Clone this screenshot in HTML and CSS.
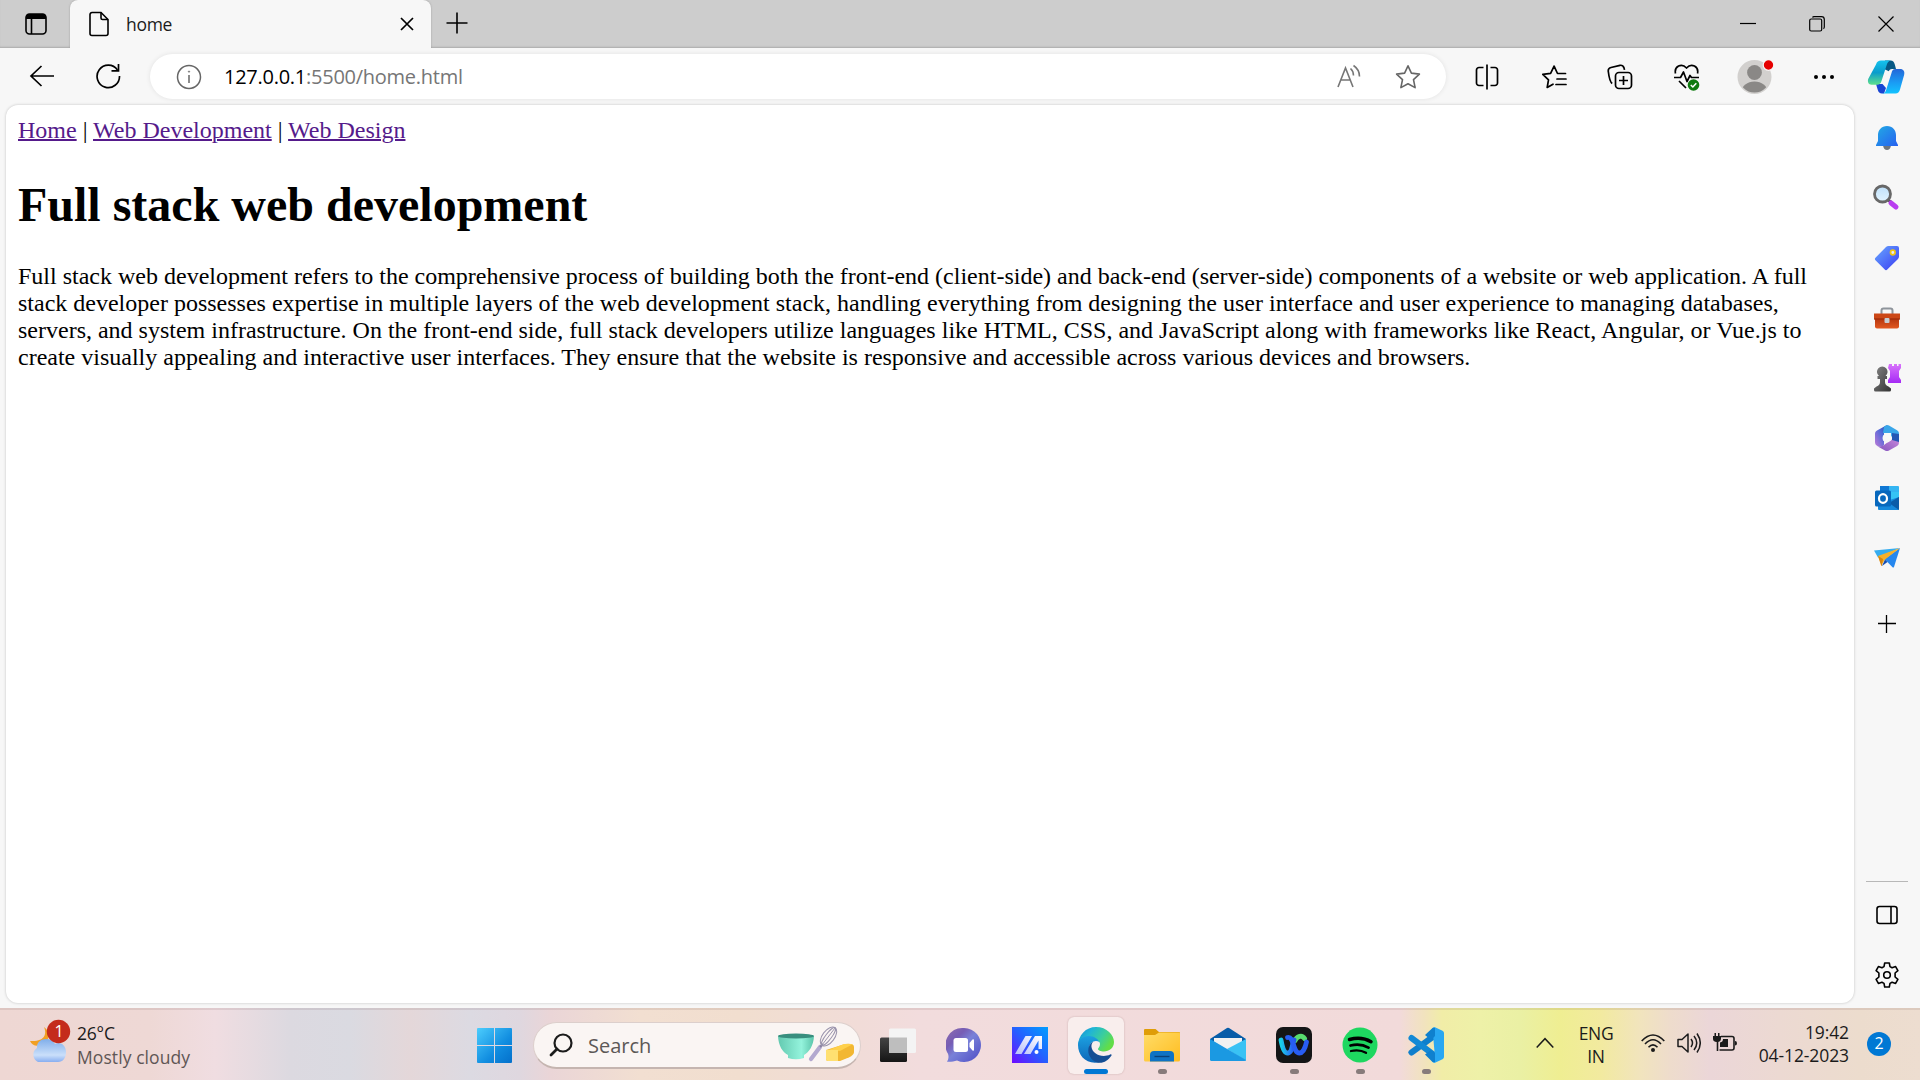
FILE: index.html
```html
<!DOCTYPE html>
<html lang="en">
<head>
<meta charset="utf-8">
<title>home</title>
<link rel="stylesheet" href="styles.css">
</head>
<body>
<div class="desktop">
  <header class="titlebar">
    <div class="tab-actions"><svg width="22" height="22" viewBox="0 0 22 22"><rect x="1" y="1" width="20" height="20" rx="3.5" fill="none" stroke="#000" stroke-width="1.6"/><path d="M1 6V4a3 3 0 0 1 3-3h14a3 3 0 0 1 3 3v2z"/><path d="M6.5 6v15" stroke="#000" stroke-width="1.6"/></svg></div>
    <div class="tab">
      <svg width="20" height="26" viewBox="0 0 20 26" fill="none" stroke="#000" stroke-width="1.6"><path d="M3 1.5h9L19 8.500V22.500a2 2 0 0 1-2 2H3a2 2 0 0 1-2-2V3.500a2 2 0 0 1 2-2z"/><path d="M12 1.500V7a1.500 1.500 0 0 0 1.500 1.500H19"/></svg>
      <span class="tab-title">home</span>
      <svg width="14" height="14" viewBox="0 0 14 14" stroke="#000" stroke-width="1.7"><path d="M1 1l12 12M13 1L1 13"/></svg>
    </div>
    <div class="new-tab"><svg width="22" height="22" viewBox="0 0 22 22" stroke="#000" stroke-width="1.6"><path d="M11 .5v21M.5 11h21"/></svg></div>
    <div class="window-controls">
      <span><svg width="16" height="16" viewBox="0 0 16 16" stroke="#000" stroke-width="1.200"><path d="M0 7.500h16"/></svg></span>
      <span><svg width="16" height="16" viewBox="0 0 16 16" fill="none" stroke="#000" stroke-width="1.200"><rect x=".7" y="3" width="12" height="12" rx="1.500"/><path d="M3.500 1.500c.3-.6.8-.8 1.500-.8h7.500a2.800 2.800 0 0 1 2.800 2.800V11c0 .8-.3 1.300-.9 1.600"/></svg></span>
      <span><svg width="16" height="16" viewBox="0 0 16 16" stroke="#000" stroke-width="1.200"><path d="M.5.5l15 15M15.500.5l-15 15"/></svg></span>
    </div>
  </header>

  <div class="toolbar">
    <div class="nav-buttons">
      <span><svg width="26" height="24" viewBox="0 0 26 24" fill="none" stroke="#000" stroke-width="1.700"><path d="M12.500 2L2 12l10.500 10M2 12h23"/></svg></span>
      <span><svg width="26" height="26" viewBox="0 0 26 26" fill="none" stroke="#000" stroke-width="1.700"><path d="M22.500 7A11.200 11.200 0 1 0 24.500 13"/><path d="M23.500 1v6.800h-7"/></svg></span>
    </div>
    <div class="address">
      <svg width="26" height="26" viewBox="0 0 26 26" fill="none" stroke="#666" stroke-width="1.500"><circle cx="13" cy="13" r="11.500"/><path d="M13 11v8"/><circle cx="13" cy="7.600" r=".7" fill="#666" stroke-width=".6"/></svg>
      <span class="url"><b>127.0.0.1</b>:5500/home.html</span>
      <svg class="read" width="26" height="26" viewBox="0 0 26 26" fill="none" stroke="#767676" stroke-width="1.600"><path d="M2 23L9.500 4 17 23M4.500 16h10"/><path d="M14.500 4.500c2 1.800 3 4.300 3 7M17.500 1.500c3.700 2.500 6 6.200 6 11"/></svg>
      <svg width="26" height="26" viewBox="0 0 26 26" fill="none" stroke="#666" stroke-width="1.600" stroke-linejoin="round"><path d="M13 1.800l3.400 7.300 8 1-5.900 5.500 1.600 8L13 19.700l-7.100 3.900 1.600-8L1.600 10.100l8-1z"/></svg>
    </div>
    <div class="tools">
      <span><svg width="26" height="26" viewBox="0 0 26 26" fill="none" stroke="#000" stroke-width="1.700"><path d="M9.500 3.500H5A2.500 2.500 0 0 0 2.500 6v13A2.500 2.500 0 0 0 5 21.500h4.500M16.500 3.500H21A2.500 2.500 0 0 1 23.500 6v13a2.500 2.500 0 0 1-2.500 2.500h-4.500M13 .5v25"/></svg></span>
      <span><svg width="26" height="26" viewBox="0 0 26 26" fill="none" stroke="#000" stroke-width="1.700" stroke-linejoin="round" stroke-linecap="round"><path d="M24.500 9.500h-8l-3.400-7.400-3.500 7.200-7.800 1 5.700 5.500-1.300 7.700 5.800-3.300M16 15h9M15 20.500h10"/></svg></span>
      <span><svg width="26" height="26" viewBox="0 0 26 26" fill="none" stroke="#000" stroke-width="1.700"><rect x="8.500" y="8.500" width="16" height="16" rx="3.500"/><path d="M16.500 12v9M12 16.500h9M5.200 19.500C3 18 1.900 12.500 1.300 7.500 1 5.500 2 4 4 3.500L13 1.300c2-.3 3.300.6 4 2.600l.5 2"/></svg></span>
      <span><svg width="28" height="28" viewBox="0 0 28 28" fill="none" stroke="#000" stroke-width="1.700" stroke-linejoin="round"><path d="M2.500 10.500C1 3.500 8.500-.5 13.500 5c5-5.500 12.500-1.500 11 5.500M1 14.500h6.500L10.500 9l3.500 9.500 3-6 1.500 2H26M6 18l7 7"/><circle cx="20.500" cy="22" r="5.800" fill="#0f7b0f" stroke="none"/><path d="M17.800 22l2 2 3.500-3.800" stroke="#fff" stroke-width="1.500"/></svg></span>
      <span class="avatar"><svg width="38" height="38" viewBox="0 0 38 38"><defs><clipPath id="face"><circle cx="17.500" cy="20" r="15.500"/></clipPath></defs><circle cx="17.500" cy="20" r="17" fill="#d2d0ce"/><g clip-path="url(#face)" fill="#8a8886"><circle cx="17.500" cy="15.500" r="7.400"/><ellipse cx="17.500" cy="35" rx="13" ry="10.500"/></g><circle cx="31.500" cy="8" r="5.300" fill="#e60000" stroke="#f7f7f7" stroke-width="1.200"/></svg></span>
      <span class="more"><svg width="22" height="6" viewBox="0 0 22 6"><circle cx="3" cy="3" r="2"/><circle cx="11" cy="3" r="2"/><circle cx="19" cy="3" r="2"/></svg></span>
      <span class="copilot"><svg width="38" height="34" viewBox="0 0 38 34"><defs><linearGradient id="cpA" x1="0" y1="0" x2="0" y2="1"><stop stop-color="#15c3ee"/><stop offset=".5" stop-color="#0a9ccc"/><stop offset="1" stop-color="#5ee08c"/></linearGradient><linearGradient id="cpB" x1="0" y1="0" x2="0" y2="1"><stop stop-color="#2467d8"/><stop offset=".55" stop-color="#1a9bf4"/><stop offset="1" stop-color="#13c3ff"/></linearGradient></defs><path d="M18 .5h5.500c2.500 0 3.500 1.500 4.300 4L29 9h-4c-1.500 0-2.500.8-3.200 2.300L17 9z" fill="#075985"/><path d="M9 24h6.500l3.500 4-2 5.500h-2c-2.500 0-3.500-1.200-4.200-3.500z" fill="#1945d3"/><path d="M9 4.500C10 1.500 11.500.5 14 .5h10c-2.500.3-3.500 2-4.300 4.500L14.500 21c-.8 2.500-2 3.700-4.500 3.700H4.500C1.500 24.700.3 22 1.200 19z" fill="url(#cpA)"/><path d="M28.500 9H33c3.500 0 5 2.500 4.100 6L33 29.500c-.8 2.800-2 4-4.500 4H15c2.500 0 3.500-1.500 4.200-3.800L24.500 13c.7-2.500 1.500-4 4-4z" fill="url(#cpB)"/></svg></span>
    </div>
  </div>

  <div class="workspace">
    <main class="page">
      <nav><a href="#">Home</a> | <a href="#">Web Development</a> | <a href="#">Web Design</a></nav>
      <h1>Full stack web development</h1>
      <p>Full stack web development refers to the comprehensive process of building both the front-end (client-side) and back-end (server-side) components of a website or web application. A full stack developer possesses expertise in multiple layers of the web development stack, handling everything from designing the user interface and user experience to managing databases, servers, and system infrastructure. On the front-end side, full stack developers utilize languages like HTML, CSS, and JavaScript along with frameworks like React, Angular, or Vue.js to create visually appealing and interactive user interfaces. They ensure that the website is responsive and accessible across various devices and browsers.</p>
    </main>
    <aside class="sidebar">
      <span><svg width="24" height="26" viewBox="0 0 24 26"><defs><linearGradient id="bell" x1="0" y1="0" x2="1" y2="1"><stop stop-color="#22abe4"/><stop offset="1" stop-color="#2660f0"/></linearGradient></defs><path d="M8 20.500h8c-.5 3-2 4.500-4 4.500s-3.500-1.500-4-4.500z" fill="#70757c"/><path d="M12 1c5.500 0 9 4 9 9v6l2 4v1H1v-1l2-4v-6c0-5 3.500-9 9-9z" fill="url(#bell)"/></svg></span>
      <span class="find"><svg width="28" height="28" viewBox="0 0 28 28"><defs><linearGradient id="lens" x1="0" y1="0" x2="0" y2="1"><stop stop-color="#bfe0fa"/><stop offset="1" stop-color="#e2f4ff"/></linearGradient></defs><path d="M16 17l3 2" stroke="#555" stroke-width="3"/><path d="M19 20l5 4" stroke="#b93df0" stroke-width="5" stroke-linecap="round"/><circle cx="10.500" cy="11" r="8" fill="url(#lens)" stroke="#686868" stroke-width="2.800"/></svg></span>
      <span><svg width="26" height="26" viewBox="0 0 26 26"><defs><linearGradient id="tag" x1="0" y1="0" x2="1" y2="1"><stop stop-color="#68a8ff"/><stop offset="1" stop-color="#3a3cf2"/></linearGradient></defs><path d="M14.500 1H23a2 2 0 0 1 2 2v8.500c0 1-.3 1.700-1 2.400L13.500 24.300a2 2 0 0 1-3 0L1.700 15.500a2 2 0 0 1 0-3L12 2c.7-.7 1.500-1 2.500-1z" fill="url(#tag)"/><circle cx="18.800" cy="7.500" r="2.300" fill="#e8e8f8" stroke="#f2c511" stroke-width="1.700"/></svg></span>
      <span><svg width="28" height="24" viewBox="0 0 28 24"><defs><linearGradient id="box" x1="0" y1="0" x2="0" y2="1"><stop stop-color="#a92d0b"/><stop offset="1" stop-color="#e25820"/></linearGradient></defs><path d="M8.500 9V4.500a2 2 0 0 1 2-2h7a2 2 0 0 1 2 2V9" fill="none" stroke="#8e949b" stroke-width="2"/><path d="M2 10h24v10.500a2 2 0 0 1-2 2H4a2 2 0 0 1-2-2z" fill="url(#box)"/><path d="M1 7.500h26V12c0 1-.5 1.500-1.500 1.500h-23C1.500 13.500 1 13 1 12z" fill="#cc4716"/><path d="M1 13h26" stroke="#912407"/><rect x="11.500" y="12" width="5" height="5" rx="1" fill="#c7ccd2"/></svg></span>
      <span><svg width="28" height="28" viewBox="0 0 28 28"><defs><linearGradient id="rook" x1="0" y1="0" x2="0" y2="1"><stop stop-color="#d873fb"/><stop offset="1" stop-color="#a52af5"/></linearGradient><linearGradient id="pawn" x1="0" y1="0" x2="1" y2="1"><stop stop-color="#858585"/><stop offset="1" stop-color="#333"/></linearGradient></defs><path d="M16 0h3v2h2V0h3v2h1.500V0H28v4l-2 3v6l2 3v3H15v-3l2-3V7l-2-3z" fill="url(#rook)"/><path d="M6 12a5.300 5.300 0 1 1 6.500 0H14v3h-2v3q0 3 3.500 4.500l2.500 2v1.500q0 1.500-1.500 1.500h-14Q1 27.500 1 26v-1.500l2.500-2Q7 21 7 18v-3H4.500v-3z" fill="url(#pawn)"/></svg></span>
      <span><svg width="26" height="28" viewBox="0 0 26 28"><defs><linearGradient id="mA" x1="0" y1="1" x2="1" y2="0"><stop stop-color="#be7bd8"/><stop offset=".6" stop-color="#4f68d8"/><stop offset="1" stop-color="#244ba8"/></linearGradient><linearGradient id="mB" x1="0" y1="1" x2="1" y2="0"><stop stop-color="#8054bd"/><stop offset="1" stop-color="#cf8cdd"/></linearGradient></defs><path d="M13 1L3 6.500C1.500 7.500 1 8.500 1 10v8c0 2 .8 3 2.500 4 2 1 4.500 1.500 6.500-1V9z" fill="url(#mA)"/><path d="M10 2.500L12 1.500q1.500-.8 3 0l8 4.700c1.500 1 2 2 2 3.800v8l-8-5V9H9z" fill="#39a6e9"/><path d="M25 12v6c0 2-.5 3-2 4l-8 4.500q-2 1-4 0l-8-4.500c2.500 1 5 .5 7-1l8-6z" fill="url(#mB)"/><path d="M25 10v8l-7-2V9z" fill="#2557b4"/><path d="M10.500 10.500q2.500-2 5 0l1.500 1q1 1 1 2.500t-1 2.500l-1.500 1q-2.500 2-5 0L9 16.500q-1-2.500 0-5z" fill="#f7f7f7"/></svg></span>
      <span><svg width="26" height="26" viewBox="0 0 26 26"><path d="M6 1h18q1 0 1 1v14H6z" fill="#34b5f2"/><path d="M6 1h9v6H6z" fill="#0f78d4"/><path d="M15 7h10v7H15z" fill="#35c4f5"/><path d="M25 12v12q0 1-1 1H5q-1 0-1-1v-5z" fill="#1689dc"/><path d="M25 12v13L15 18z" fill="#0b5ca9"/><rect x="1" y="5.500" width="16" height="16" rx="1.500" fill="#0868bd"/><ellipse cx="9" cy="13.500" rx="4" ry="4.300" fill="none" stroke="#fff" stroke-width="2.200"/></svg></span>
      <span><svg width="28" height="22" viewBox="0 0 28 22"><path d="M1 3.500L27 1 5 10.500z" fill="#35acef"/><path d="M11.500 12L27 1l-6 19q-.5 1-1.500.3z" fill="#2687ee"/><path d="M5 9L27 1 12 12.500 8.500 18z" fill="#f6b02a"/><path d="M5 9l5 3-1 6.500q-.5 1-1-.2z" fill="#d7860e"/><path d="M12 12.500l2.500 2.500-5.500 4z" fill="#154eb1"/></svg></span>
      <span class="add"><svg width="18" height="18" viewBox="0 0 18 18" stroke="#000" stroke-width="1.300"><path d="M8.500 0v18M0 8.500h18"/></svg></span>
      <hr>
      <span><svg width="22" height="20" viewBox="0 0 22 20" fill="none" stroke="#000" stroke-width="1.600"><rect x="1" y="1.500" width="20" height="17" rx="2.500"/><path d="M15 1.500v17"/></svg></span>
      <span><svg width="26" height="26" viewBox="0 0 26 26" fill="none" stroke="#000" stroke-width="1.600" stroke-linejoin="round"><path d="M10.700 1h4.600l.7 3.600 2.100 1.200 3.500-1.200 2.300 4-2.800 2.400v4l2.800 2.400-2.300 4-3.500-1.200-2.100 1.200-.7 3.600h-4.600l-.7-3.600-2.100-1.200-3.500 1.200-2.300-4L4.900 15v-4L2.100 8.600l2.300-4 3.500 1.200L10 4.600z"/><circle cx="13" cy="13" r="3.300"/></svg></span>
    </aside>
  </div>

  <footer class="taskbar">
    <div class="weather">
      <svg width="42" height="46" viewBox="0 0 42 46"><defs><linearGradient id="cloud" x1="0" y1="0" x2="0" y2="1"><stop stop-color="#80aeea"/><stop offset=".7" stop-color="#cadffa"/><stop offset="1" stop-color="#88aef0"/></linearGradient></defs><path d="M15 9c3 7 1 15-14 14 2 5 8 6 13 3 7-4 8-12 1-17z" fill="#f2a023"/><path d="M9 44a8 8 0 0 1-1-14c-1-10 14-12 18-4 6-3 11 2 11 8s-3 10-8 10z" fill="url(#cloud)"/><circle cx="29.500" cy="13.500" r="11.700" fill="#c42b1c"/><text x="30" y="19" text-anchor="middle" class="badge-text">1</text></svg>
      <div class="forecast"><div class="temp">26°C</div><div class="sky">Mostly cloudy</div></div>
    </div>
    <div class="start"><svg width="35" height="35" viewBox="0 0 35 35"><defs><linearGradient id="win" x1="0" y1="0" x2="1" y2="1"><stop stop-color="#4ccdfd"/><stop offset=".6" stop-color="#118de0"/><stop offset="1" stop-color="#0470cb"/></linearGradient></defs><path d="M1 0h16v17H0V1q0-1 1-1zM18 0h16q1 0 1 1v16H18zM0 18h17v17H1q-1 0-1-1zM18 18h17v16q0 1-1 1H18z" fill="url(#win)"/></svg></div>
    <div class="search">
      <svg width="24" height="24" viewBox="0 0 24 24" fill="none" stroke="#1b1b1b" stroke-width="2.200"><circle cx="14" cy="10" r="8.500"/><path d="M8 16l-6 6" stroke-width="2.800" stroke-linecap="round"/></svg>
      <span>Search</span>
      <svg class="baking" width="78" height="38" viewBox="0 0 78 38"><defs><linearGradient id="bowl" x1="0" y1="0" x2="1" y2="0"><stop stop-color="#63c9b0"/><stop offset=".65" stop-color="#94f3dc"/><stop offset="1" stop-color="#5bc4aa"/></linearGradient></defs><path d="M0 10h36c-.5 10-5 16-10 19v3q-8 2.500-16 0v-3C4.500 26 .5 20 0 10z" fill="url(#bowl)"/><ellipse cx="18" cy="10" rx="18" ry="2.500" fill="#398e7e"/><path d="M33 33l9-12" stroke="#b3a9cf" stroke-width="4.200" stroke-linecap="round"/><path d="M42 21l3-3" stroke="#8780a0" stroke-width="2"/><g fill="none" stroke="#9a93ac"><ellipse cx="50.500" cy="10.500" rx="11" ry="6" transform="rotate(-53 50.500 10.500)"/><ellipse cx="50.500" cy="10.500" rx="11" ry="3" transform="rotate(-53 50.500 10.500)"/><path d="M44 19L57 2"/></g><path d="M48 24l19-6q9-1 9 3v5c0 3-3 5-14 9H50q-2 0-2-2z" fill="#f2b732"/><path d="M48 25l18-7h9l-13 7z" fill="#ffd04a"/><path d="M48 24h12v11H50q-2 0-2-2z" fill="#ffe071"/></svg>
    </div>
    <div class="apps">
      <span><svg width="36" height="36" viewBox="0 0 36 36"><defs><linearGradient id="tv" x1="0" y1="0" x2="0" y2="1"><stop stop-color="#444"/><stop offset="1" stop-color="#151515"/></linearGradient></defs><rect x="0" y="10.500" width="27" height="24.500" rx="1.500" fill="url(#tv)"/><rect x="9" y="1.500" width="27" height="24.500" rx="1.500" fill="#f4f4f4"/><path d="M9 10.500h18V26H10q-1 0-1-1z" fill="#bebebe"/></svg></span>
      <span><svg width="36" height="36" viewBox="0 0 36 36"><defs><linearGradient id="chat" x1="0" y1="0" x2="1" y2="1"><stop stop-color="#8f6fae"/><stop offset=".3" stop-color="#765cb4"/><stop offset=".5" stop-color="#7981d8"/><stop offset="1" stop-color="#4d4cc5"/></linearGradient></defs><path d="M18 1a17 17 0 1 1-7 32.500c-3 1-6 1.500-10 1.300 1.500-3 2-5 1-8A17 17 0 0 1 18 1z" fill="url(#chat)"/><rect x="7.500" y="11" width="14.500" height="14" rx="2.500" fill="#fff"/><path d="M23.500 16l3-3.500q1.500-.8 1.500.7v9.600q0 1.500-1.500.7l-3-3.500z" fill="#fff"/></svg></span>
      <span><svg width="36" height="36" viewBox="0 0 36 36"><defs><linearGradient id="asus" x1="0" y1="1" x2="1" y2="0"><stop stop-color="#6f0aff"/><stop offset=".5" stop-color="#255fff"/><stop offset="1" stop-color="#009eff"/></linearGradient><linearGradient id="asusM" x1="1" y1="0" x2="0" y2="1"><stop stop-color="#fff"/><stop offset="1" stop-color="#b5bdfa"/></linearGradient></defs><path fill="url(#asus)" d="M0 0h36v36H0z"/><path d="M3 27L13.500 9H20L9.500 27zM12 27L23 9h7v13h-3.500V13.500L18.500 27z" fill="url(#asusM)"/><circle cx="24.500" cy="25" r="2" fill="#fff"/></svg></span>
      <span class="active"><svg width="36" height="36" viewBox="0 0 36 36"><defs><linearGradient id="edA" x1="0" y1="0" x2="1" y2=".5"><stop stop-color="#1889cc"/><stop offset=".35" stop-color="#20b4d6"/><stop offset=".7" stop-color="#3ccf9a"/><stop offset="1" stop-color="#62dd48"/></linearGradient><linearGradient id="edB" x1="0" y1="0" x2="0" y2="1"><stop stop-color="#1ca0e0"/><stop offset="1" stop-color="#0d66b8"/></linearGradient></defs><path d="M18 0c11 0 18 8 18 15 0 6-5 9.500-10 9.500-3.500 0-6-1.200-6-2.500 0-1 2-2 2-5 0-3-3.500-5-8-5C8 12 2 15 0 19 0 8 8 0 18 0z" fill="url(#edA)"/><path d="M0 18c0-5 5-9 11-9 5 0 9 3 10.500 6-6-3-12 2-10 10 1.500 6 6 9.500 11 10C9 38.500 0 29 0 18z" fill="url(#edB)"/><path d="M15.500 14.500C8 18 8 31 19 35.500c6 1.500 11-2 14.500-7 .5-1-.5-1.500-1.300-1-8.500 4-18-1-18.700-7.500-.3-2.500.5-4 2-5.500z" fill="#154e94"/></svg><i></i></span>
      <span class="open"><svg width="36" height="36" viewBox="0 0 36 36"><defs><linearGradient id="fold" x1="0" y1="0" x2="1" y2="1"><stop stop-color="#ffdc68"/><stop offset="1" stop-color="#ffbd20"/></linearGradient></defs><path d="M0 3q0-1 1-1h10.500L15 5h20q1 0 1 1v10H0z" fill="#df9d08"/><path d="M0 8h11l4-2.500h20q1 0 1 1V33q0 1.500-1.500 1.500h-33Q0 34.500 0 33z" fill="url(#fold)"/><path d="M6 34.500V28q0-4 4-4h16q4 0 4 4v6.500z" fill="#0f73c4"/><path d="M10.500 29.500h15" stroke="#0a4178" stroke-width="1.400"/></svg><i></i></span>
      <span><svg width="36" height="36" viewBox="0 0 36 36"><path d="M0 12L17 1q1-.6 2 0l17 11v5H0z" fill="#075ca8"/><path d="M4 11h28v4L18 23 4 15z" fill="#f1f1f1"/><path d="M36 12v22L17 22z" fill="#39c2f4"/><path d="M0 12l36 21q-.5 1-1.500 1h-33Q0 34 0 32.500z" fill="#1b99e2"/></svg></span>
      <span class="open"><svg width="36" height="36" viewBox="0 0 36 36"><defs><linearGradient id="wx" x1="0" y1="0" x2="1" y2="0"><stop stop-color="#18d0e8"/><stop offset=".7" stop-color="#2878f4"/><stop offset="1" stop-color="#2556e8"/></linearGradient></defs><rect width="36" height="36" rx="7" fill="#141516"/><path d="M19 13.500c2-4.500 7-6 9.500-2" fill="none" stroke="#58dc6e" stroke-width="5" stroke-linecap="round"/><path d="M5 13c1.500 8.500 3.500 13.500 7 13 4.500-.5 4-9 6-13" fill="none" stroke="url(#wx)" stroke-width="4.800" stroke-linecap="round"/><path d="M11.500 10.500c7-1.500 5 15.500 12 15.500 3.500 0 6-6 7-11" fill="none" stroke="#285df2" stroke-width="4.800" stroke-linecap="round"/></svg><i></i></span>
      <span class="open"><svg width="36" height="36" viewBox="0 0 36 36"><circle cx="18" cy="18" r="17.500" fill="#1ed760"/><g fill="none" stroke="#000" stroke-linecap="round"><path d="M7.500 12.500q12-3.300 21.500 2.200" stroke-width="3.500"/><path d="M8.500 18.500q10-2.500 18 2.100" stroke-width="2.800"/><path d="M9 24q8.500-2 15 1.800" stroke-width="2.300"/></g></svg><i></i></span>
      <span class="open"><svg width="36" height="36" viewBox="0 0 36 36"><path d="M26 9L3.500 25.500" stroke="#0f7fcc" stroke-width="6" stroke-linecap="round"/><path d="M3.500 11L26 28" stroke="#1389d5" stroke-width="6" stroke-linecap="round"/><path d="M24.500 1q1.500-1.500 3-.5l7 3.300Q36 4.500 36 6v24q0 1.500-1.500 2.200l-7 3.300q-1.500 1-3-.5l2.500-4z" fill="#28a7f2"/><path d="M24.500 1L17 8l6 5 4-4V1zM17 27.500l7.500 7.500H27v-9l-4-3z" fill="#0f80ce"/></svg><i></i></span>
    </div>
    <div class="tray">
      <div class="chevron"><svg width="18" height="12" viewBox="0 0 18 12" fill="none" stroke="#1b1b1b" stroke-width="1.500"><path d="M.7 10.500L9 1.700l8.300 8.800"/></svg></div>
      <div class="language">ENG<br>IN</div>
      <div class="status">
        <svg width="24" height="20" viewBox="0 0 24 20" fill="none" stroke="#1b1b1b" stroke-width="1.600"><path d="M.7 8q11.300-12 22.600 0M4 11q8-8.500 16 0M7.500 14.200q4.500-4.700 9 0"/><circle cx="12" cy="17" r="2" fill="#1b1b1b" stroke="none"/></svg>
        <svg width="24" height="22" viewBox="0 0 24 22" fill="none" stroke="#1b1b1b" stroke-width="1.500" stroke-linejoin="round"><path d="M1 7.500h4L11 2v18l-6-5.500H1zM14 7q3 4 0 8M17 4q5.500 7 0 14M20 1.500q6.500 9.500 0 19"/></svg>
        <svg width="24" height="20" viewBox="0 0 24 20"><path d="M8 3.500h11q2 0 2 2v9.500q0 2-2 2H6.500" fill="none" stroke="#1b1b1b" stroke-width="1.600"/><path d="M22 8q2 0 2 2.200T22 12.500zM10 6h5v8H7V9.500q3-.5 3-3.500zM1.500 0H3v3h2V0h1.500v3H8v3q0 2.500-2.700 3V18H3.700V9Q0 8.500 0 6V3h1.500z" fill="#1b1b1b"/></svg>
      </div>
      <div class="clock">19:42<br>04-12-2023</div>
      <div class="notifications">2</div>
    </div>
  </footer>
</div>
</body>
</html>
```
FILE: styles.css
```css
* { box-sizing: border-box; }
body { margin: 0; }
svg { display: block; flex: none; }

.desktop {
  display: grid;
  grid-template-rows: 48px 57px 903px 72px;
  width: 1920px;
  height: 1080px;
  overflow: hidden;
  background: #f7f7f7;
  font-family: "Open Sans", "Noto Sans", sans-serif;
}

/* Title bar */
.titlebar { display: flex; background: #cdcdcd; box-shadow: inset 0 -2px 2px -1px #aaa; }
.tab-actions { width: 70px; padding: 13px 0 0 25px; }
.tab {
  display: flex;
  align-items: center;
  width: 361px;
  height: 48px;
  padding: 0 17px 0 19px;
  background: #f7f7f7;
  border-radius: 8px 8px 0 0;
  box-shadow: 0 0 2px #999;
  clip-path: inset(0 -3px 0 -3px);
}
.tab-title { flex: 1; margin: -1px 0 0 17px; font-size: 17.5px; letter-spacing: -0.3px; color: #1b1b1b; }
.new-tab { padding: 12px 0 0 15px; }
.window-controls { display: flex; height: 47px; margin-left: auto; }
.window-controls span { display: flex; align-items: center; justify-content: center; width: 69px; }

/* Toolbar */
.toolbar { display: flex; }
.nav-buttons { display: flex; width: 150px; height: 56px; padding-left: 9px; }
.nav-buttons span { display: flex; align-items: center; justify-content: center; width: 66px; }
.address {
  display: flex;
  align-items: center;
  width: 1296px;
  height: 45px;
  margin-top: 6px;
  padding: 0 25px 0 26px;
  border-radius: 23px;
  background: #fff;
  box-shadow: 0 0 5px rgba(0, 0, 0, .09);
}
.url { flex: 1; margin: -1px 0 0 22px; font-size: 20px; letter-spacing: -.26px; color: #767676; }
.url b { font-weight: 400; color: #000; }
.read { margin-right: 33px; }
.tools { display: flex; height: 57px; padding-left: 8px; }
.tools span { display: flex; align-items: center; justify-content: center; width: 66.5px; }
.tools .avatar { width: 72px; padding-bottom: 2px; }
.tools .more { width: 63px; }
.tools .copilot { width: 62px; }

/* Web page */
.workspace { display: flex; }
.page {
  width: 1848px;
  height: 898px;
  margin-left: 6px;
  padding: 12px;
  border-radius: 12px;
  background: #fff;
  box-shadow: 0 0 3px rgba(0, 0, 0, .22);
  font: 24px/27px "Liberation Serif", "Times New Roman", serif;
  color: #000;
}
.page a { color: #551a8b; text-decoration-thickness: 2px; }
.page h1 { margin: 34px 0 31px; font-size: 48px; line-height: 54px; }
.page p { margin: 0; }

/* Sidebar */
.sidebar { display: flex; flex-direction: column; align-items: center; width: 66px; padding: 3px 0; }
.sidebar span { display: flex; align-items: center; justify-content: center; height: 60px; }
.sidebar .find { padding: 0 2px 2px 0; }
.sidebar .add { height: 72px; }
.sidebar hr { width: 42px; height: 1px; margin: auto 0 3px; border: 0; background: #b8b8b8; }

/* Taskbar */
.taskbar {
  display: flex;
  background: linear-gradient(90deg, #eed7d3 0, #eed8d5 150px, #f0dde1 215px, #dcd9e0 290px, #dadae1 350px, #e4d7d9 410px, #dcdae2 470px, #dfd7df 520px, #ead5d7 550px, #f2dfd1 640px, #f1decf 740px, #f1dcd8 860px, #f2dcdd 920px, #f2dada 1400px, #f1e3bd 1425px, #f1eda7 1442px, #eef1a8 1480px, #eaf0a4 1520px, #efee92 1560px, #f2ea9f 1600px, #f1e4bd 1640px, #eedccc 1670px, #ebd6d8 1710px, #ecd9d2 1780px, #ecdccd 1860px, #edddd0 1920px);
  box-shadow: inset 0 2px 0 rgba(80, 40, 40, .1);
}
.weather { display: flex; width: 477px; padding: 10px 0 0 29px; }
.forecast { margin: 3px 0 0 6px; font-size: 17.5px; line-height: 24px; color: #1b1b1b; }
.temp { letter-spacing: -.2px; }
.sky { letter-spacing: .08px; color: #5f5655; }
.badge-text { font-size: 16px; fill: #fff; }
.start { width: 56px; padding-top: 20px; }
.search {
  display: flex;
  align-items: center;
  width: 328px;
  height: 47px;
  margin-top: 14px;
  padding: 0 4px 0 15px;
  border: 1px solid #dccfcc;
  border-bottom: 2px solid #c5b5b0;
  border-radius: 24px;
  background: #faf5f3;
  font-size: 20px;
  color: #5c5856;
}
.search span { flex: 1; margin-left: 15px; }
.baking { margin-bottom: 1px; }
.apps { display: flex; padding-left: 4px; }
.apps span { display: flex; flex-direction: column; align-items: center; width: 56px; height: 57px; margin: 9px 5px 0; padding-top: 10px; }
.apps .active { border-radius: 6px; background: #f9eeed; box-shadow: 0 0 2px rgba(80, 30, 30, .25); }
.apps i { width: 9px; height: 5px; margin-top: 6px; border-radius: 3px; background: #877b7b; }
.apps .active i { width: 24px; background: #0078d4; }
.tray { display: flex; flex: 1; color: #1b1b1b; font-size: 17.5px; line-height: 23px; }
.chevron { margin-left: 77px; padding-top: 29px; }
.language { width: 50px; margin: 14px 0 0 17px; text-align: center; letter-spacing: -.3px; }
.status { display: flex; align-items: center; gap: 12px; height: 70px; margin-left: 20px; }
.clock { flex: 1; margin-top: 13px; text-align: right; letter-spacing: -.1px; }
.notifications { width: 24px; height: 24px; margin: 24px 29px 0 18px; border-radius: 50%; background: #0078d4; color: #fff; font-size: 16px; line-height: 23px; text-align: center; }
```
